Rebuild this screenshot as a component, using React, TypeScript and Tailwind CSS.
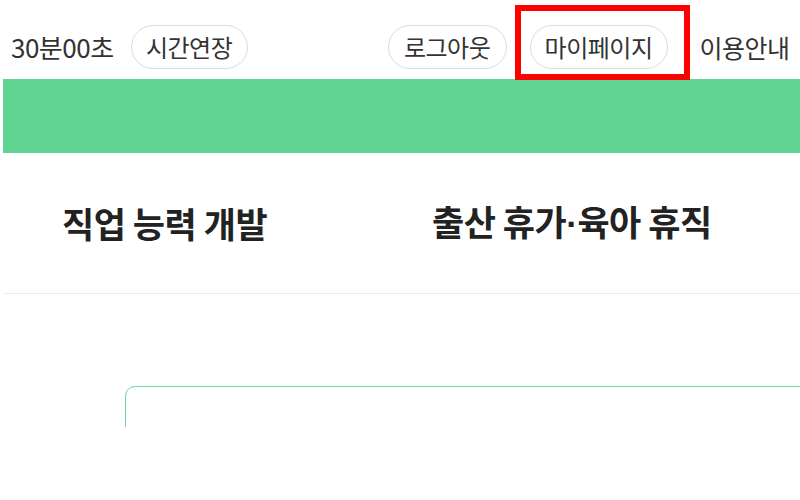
import React from "react";

const Pill = ({ label, w }: { label: string; w: string }) => (
  <button
    className={`${w} h-[44px] rounded-full border border-[#dcdcdc] bg-white text-[24px] tracking-[-0.5px] text-[#333] flex items-center justify-center`}
  >
    {label}
  </button>
);

export default function App() {
  return (
    <div
      className="relative w-[800px] h-[500px] overflow-hidden bg-white"
      style={{ fontFamily: '"Noto Sans CJK KR", "Noto Sans", sans-serif' }}
    >
      {/* top bar */}
      <div className="h-[79px] flex items-end pb-[10px] pl-[11px]">
        <div className="flex items-center">
          <span className="text-[26px] tracking-[-0.5px] text-[#333] leading-none">30분00초</span>
          <div className="ml-[17px]">
            <Pill label="시간연장" w="w-[117px]" />
          </div>
        </div>
        <div className="ml-[140px] flex items-center">
          <Pill label="로그아웃" w="w-[119px]" />
          <div className="ml-[23px]">
            <Pill label="마이페이지" w="w-[138px]" />
          </div>
          <span className="ml-[32px] text-[25px] tracking-[-0.5px] text-[#333] leading-none">이용안내</span>
        </div>
      </div>

      {/* highlight annotation */}
      <div className="absolute left-[515px] top-[5px] w-[175px] h-[75px] border-[6px] border-[#ff0000] pointer-events-none" />

      {/* green banner */}
      <div className="ml-[3px] h-[74px] bg-[#62d491]" />

      {/* menu */}
      <nav className="ml-[3px] h-[141px] flex items-center border-b border-[#ebebeb]">
        <div className="w-[367px] pl-[59px]">
          <span className="text-[35px] font-semibold tracking-[-0.5px] text-[#222]">직업 능력 개발</span>
        </div>
        <div className="pl-[62px]">
          <span className="text-[35px] font-semibold tracking-[-0.5px] text-[#222]">
            출산 휴가<span style={{ fontFamily: '"Liberation Sans", sans-serif' }}>·</span>육아 휴직
          </span>
        </div>
      </nav>

      {/* content card (cut off) */}
      <div className="pt-[92px] pl-[125px]">
        <div className="h-[41px] overflow-hidden">
          <div className="h-[200px] w-[700px] rounded-[10px] border-[1.5px] border-[#6fd89a]" />
        </div>
      </div>
    </div>
  );
}
